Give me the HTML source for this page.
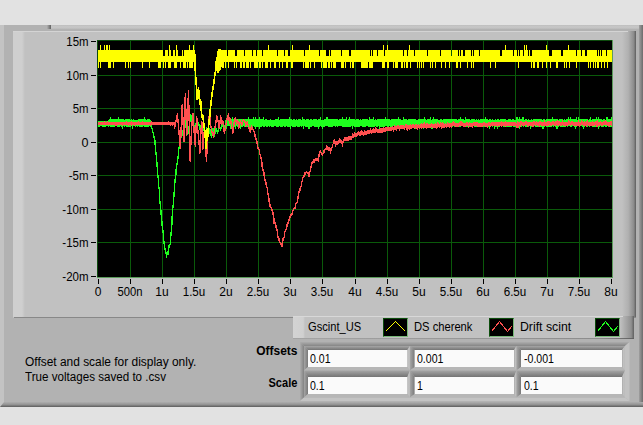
<!DOCTYPE html>
<html><head><meta charset="utf-8"><title>Waveform</title>
<style>
html,body{margin:0;padding:0}
body{width:643px;height:425px;background:#e2e2e2;overflow:hidden;position:relative;font-family:"Liberation Sans",sans-serif;color:#000}
div{position:absolute;box-sizing:border-box}
.frame{left:0;top:25px;width:643px;height:382px;background:#b2b2b2}
.fl{left:0;top:25px;width:4px;height:382px;background:#c3c3c3}
.fr{left:639px;top:25px;width:4px;height:382px;background:linear-gradient(90deg,#a0a0a0,#6c6c6c)}
.fb{left:0;top:402px;width:643px;height:5px;background:linear-gradient(180deg,#aeaeae,#949494 50%,#5c5c5c);clip-path:polygon(4px 0,100% 0,100% 100%,0 100%)}
.ft{left:51px;top:25px;width:592px;height:4px;background:linear-gradient(180deg,#bebebe,#c8c8c8 50%,#bababa)}
.fn{left:47px;top:25px;width:4px;height:4px;background:linear-gradient(90deg,#b0b0b0,#606060)}
.panel{left:13px;top:31px;width:623px;height:287px;background:#c1c1c1}
.pl{left:13px;top:31px;width:12px;height:286px;background:linear-gradient(90deg,#cfcfcf,#cfcfcf 75%,#c1c1c1)}
.pr{left:622px;top:31px;width:14px;height:286px;background:linear-gradient(90deg,#c1c1c1,#b0b0b0 45%,#8a8a8a 85%,#5c5c5c)}
.pt{left:13px;top:31px;width:615px;height:1px;background:#d4d4d4}
.pb{left:14px;top:317px;width:622px;height:1px;background:#888}
.plot{position:absolute;left:0;top:0}
.legend{left:293px;top:316px;width:341px;height:23px;background:#c1c1c1}
.lgl{left:293px;top:316px;width:12px;height:22px;background:linear-gradient(90deg,#d3d3d3,#d0d0d0 85%,#c1c1c1)}
.lgr{left:620px;top:316px;width:14px;height:23px;background:linear-gradient(90deg,#c1c1c1,#909090 80%,#606060)}
.lgt{left:293px;top:316px;width:330px;height:1px;background:#d8d8d8}
.lgb{left:293px;top:338px;width:341px;height:1px;background:linear-gradient(90deg,#a4a4a4,#8c8c8c 90%,#606060)}
.t{white-space:nowrap;transform-origin:0 0}
.lt{font-size:13px;line-height:16px;top:319px}
.ic{width:25px;height:19px;top:318px;background:#000;border:1px solid;border-color:#0c4c0c #78b878 #78b878 #0c4c0c}
.ic svg{position:absolute;left:-1px;top:-1px}
.note{left:24.6px;font-size:12px;line-height:15px}
.lab{font-weight:bold;font-size:12px;line-height:14px;transform-origin:100% 0;right:345.5px}
.cv{font-size:12px;line-height:15px;transform:scaleX(.88)}
</style></head><body>
<div class="frame"></div><div class="fl"></div><div class="ft"></div><div class="fn"></div><div class="fr"></div><div class="fb"></div>
<div class="panel"></div><div class="pl"></div><div class="pr"></div><div class="pt"></div><div class="pb"></div>
<svg class="plot" width="643" height="425" viewBox="0 0 643 425">
<g shape-rendering="crispEdges">
<rect x="97" y="40" width="516" height="238" fill="#000"/>
<g fill="#0a5a0a"><rect x="130" y="41" width="1" height="236"/><rect x="162" y="41" width="1" height="236"/><rect x="194" y="41" width="1" height="236"/><rect x="226" y="41" width="1" height="236"/><rect x="258" y="41" width="1" height="236"/><rect x="290" y="41" width="1" height="236"/><rect x="322" y="41" width="1" height="236"/><rect x="355" y="41" width="1" height="236"/><rect x="387" y="41" width="1" height="236"/><rect x="419" y="41" width="1" height="236"/><rect x="451" y="41" width="1" height="236"/><rect x="483" y="41" width="1" height="236"/><rect x="515" y="41" width="1" height="236"/><rect x="547" y="41" width="1" height="236"/><rect x="579" y="41" width="1" height="236"/><rect x="98" y="75" width="514" height="1"/><rect x="98" y="108" width="514" height="1"/><rect x="98" y="142" width="514" height="1"/><rect x="98" y="175" width="514" height="1"/><rect x="98" y="209" width="514" height="1"/><rect x="98" y="242" width="514" height="1"/></g>
<g fill="#0c4a0c"><rect x="97" y="40" width="516" height="1"/><rect x="97" y="40" width="1" height="238"/></g>
<g fill="#5c9c5c"><rect x="97" y="277" width="516" height="1"/><rect x="612" y="40" width="1" height="238"/></g>
<g fill="#000"><rect x="98" y="279" width="1" height="5"/><rect x="130" y="279" width="1" height="5"/><rect x="162" y="279" width="1" height="5"/><rect x="194" y="279" width="1" height="5"/><rect x="226" y="279" width="1" height="5"/><rect x="258" y="279" width="1" height="5"/><rect x="290" y="279" width="1" height="5"/><rect x="322" y="279" width="1" height="5"/><rect x="355" y="279" width="1" height="5"/><rect x="387" y="279" width="1" height="5"/><rect x="419" y="279" width="1" height="5"/><rect x="451" y="279" width="1" height="5"/><rect x="483" y="279" width="1" height="5"/><rect x="515" y="279" width="1" height="5"/><rect x="547" y="279" width="1" height="5"/><rect x="579" y="279" width="1" height="5"/><rect x="611" y="279" width="1" height="5"/><rect x="91" y="41" width="5" height="1"/><rect x="91" y="75" width="5" height="1"/><rect x="91" y="108" width="5" height="1"/><rect x="91" y="142" width="5" height="1"/><rect x="91" y="175" width="5" height="1"/><rect x="91" y="209" width="5" height="1"/><rect x="91" y="242" width="5" height="1"/><rect x="91" y="276" width="5" height="1"/></g>
</g>
<g fill="none" stroke-linejoin="round">
<path stroke="#1eff1e" stroke-width="1" shape-rendering="crispEdges" d="M98.5 121V127M99.5 121V127M100.5 121V126M101.5 121V126M102.5 121V127M103.5 121V127M104.5 121V127M105.5 121V127M106.5 121V126M107.5 121V126M108.5 120V127M109.5 119V126M110.5 117V127M111.5 119V127M112.5 119V127M113.5 119V127M114.5 119V127M115.5 119V126M116.5 119V126M117.5 119V127M118.5 117V127M119.5 119V127M120.5 119V126M121.5 119V127M122.5 119V129M123.5 119V126M124.5 120V127M125.5 119V126M126.5 119V127M127.5 119V127M128.5 119V127M129.5 119V127M130.5 120V127M131.5 119V126M132.5 120V129M133.5 119V126M134.5 120V126M135.5 120V127M136.5 120V126M137.5 120V127M138.5 119V126M139.5 119V127M140.5 119V127M141.5 119V127M142.5 119V127M143.5 119V126M144.5 117V127M145.5 119V127M146.5 120V127M147.5 119V127M148.5 119V127M149.5 119V126M150.5 120V127M225.5 120V127M226.5 119V129M227.5 119V126M228.5 119V126M229.5 119V126M230.5 119V129M231.5 119V129M232.5 117V127M233.5 119V127M234.5 119V127M235.5 119V129M236.5 119V126M237.5 119V127M238.5 119V126M239.5 119V127M240.5 119V129M241.5 119V127M242.5 119V127M243.5 120V126M244.5 119V127M245.5 119V127M246.5 119V127M247.5 119V127M248.5 117V127M249.5 119V127M250.5 119V127M251.5 119V129M252.5 119V127M253.5 117V126M254.5 119V127M255.5 117V129M256.5 119V127M257.5 119V127M258.5 119V127M259.5 117V129M260.5 119V127M261.5 119V127M262.5 119V126M263.5 117V127M264.5 120V127M265.5 119V126M266.5 119V127M267.5 120V127M268.5 120V126M269.5 120V127M270.5 119V126M271.5 120V127M272.5 120V127M273.5 120V127M274.5 120V126M275.5 119V126M276.5 119V127M277.5 119V127M278.5 117V127M279.5 120V126M280.5 119V127M281.5 119V127M282.5 119V127M283.5 119V126M284.5 119V127M285.5 119V127M286.5 119V126M287.5 119V127M288.5 119V127M289.5 117V127M290.5 119V129M291.5 119V126M292.5 120V127M293.5 119V127M294.5 119V127M295.5 120V127M296.5 119V126M297.5 120V127M298.5 119V127M299.5 119V127M300.5 119V126M301.5 120V127M302.5 117V126M303.5 119V129M304.5 119V126M305.5 120V127M306.5 119V127M307.5 119V127M308.5 119V129M309.5 120V129M310.5 119V127M311.5 119V127M312.5 120V126M313.5 119V126M314.5 119V127M315.5 119V127M316.5 119V127M317.5 120V127M318.5 119V129M319.5 119V127M320.5 117V126M321.5 120V127M322.5 120V129M323.5 120V127M324.5 119V127M325.5 119V126M326.5 117V126M327.5 117V126M328.5 119V127M329.5 119V127M330.5 119V127M331.5 119V127M332.5 119V127M333.5 119V126M334.5 119V126M335.5 119V127M336.5 119V126M337.5 119V127M338.5 120V126M339.5 119V126M340.5 119V126M341.5 119V126M342.5 117V127M343.5 119V127M344.5 119V127M345.5 119V127M346.5 117V127M347.5 120V127M348.5 119V127M349.5 117V127M350.5 119V127M351.5 119V126M352.5 119V129M353.5 119V126M354.5 119V127M355.5 120V127M356.5 119V127M357.5 119V127M358.5 119V127M359.5 120V127M360.5 119V126M361.5 120V126M362.5 119V127M363.5 119V127M364.5 119V127M365.5 119V127M366.5 119V126M367.5 119V126M368.5 120V127M369.5 117V127M370.5 119V127M371.5 119V127M372.5 119V127M373.5 117V127M374.5 120V127M375.5 119V126M376.5 120V127M377.5 119V127M378.5 119V126M379.5 119V129M380.5 119V127M381.5 119V127M382.5 119V127M383.5 119V127M384.5 119V127M385.5 117V126M386.5 119V126M387.5 119V127M388.5 119V127M389.5 119V126M390.5 120V127M391.5 119V127M392.5 119V127M393.5 119V126M394.5 119V127M395.5 119V127M396.5 119V126M397.5 119V127M398.5 117V127M399.5 119V127M400.5 119V126M401.5 120V127M402.5 120V126M403.5 117V129M404.5 119V127M405.5 119V127M406.5 119V127M407.5 120V127M408.5 119V126M409.5 119V127M410.5 119V127M411.5 119V127M412.5 119V126M413.5 119V127M414.5 119V126M415.5 119V129M416.5 120V127M417.5 120V127M418.5 119V126M419.5 119V127M420.5 119V127M421.5 119V126M422.5 119V127M423.5 119V129M424.5 117V126M425.5 119V127M426.5 120V127M427.5 119V127M428.5 119V127M429.5 119V127M430.5 117V127M431.5 120V129M432.5 119V129M433.5 117V127M434.5 119V126M435.5 119V127M436.5 119V127M437.5 119V127M438.5 120V126M439.5 120V127M440.5 119V127M441.5 119V127M442.5 120V127M443.5 119V127M444.5 119V127M445.5 119V126M446.5 119V127M447.5 119V127M448.5 119V127M449.5 119V127M450.5 119V127M451.5 119V127M452.5 119V127M453.5 119V126M454.5 119V127M455.5 119V127M456.5 119V127M457.5 120V127M458.5 119V127M459.5 119V127M460.5 117V127M461.5 119V126M462.5 119V126M463.5 119V127M464.5 120V127M465.5 117V127M466.5 119V127M467.5 119V127M468.5 119V127M469.5 119V127M470.5 120V127M471.5 119V127M472.5 119V126M473.5 119V126M474.5 119V127M475.5 120V127M476.5 119V127M477.5 120V127M478.5 119V127M479.5 120V127M480.5 119V126M481.5 119V127M482.5 119V127M483.5 119V127M484.5 119V127M485.5 117V126M486.5 119V127M487.5 119V127M488.5 120V127M489.5 119V129M490.5 119V127M491.5 120V126M492.5 119V127M493.5 120V126M494.5 120V129M495.5 119V127M496.5 120V127M497.5 119V129M498.5 119V127M499.5 120V127M500.5 119V126M501.5 119V126M502.5 119V126M503.5 119V127M504.5 119V127M505.5 119V126M506.5 120V127M507.5 120V127M508.5 119V127M509.5 119V127M510.5 119V127M511.5 120V127M512.5 119V126M513.5 119V127M514.5 120V127M515.5 120V127M516.5 117V127M517.5 117V127M518.5 119V127M519.5 117V129M520.5 119V127M521.5 119V127M522.5 117V126M523.5 117V127M524.5 120V126M525.5 119V127M526.5 119V127M527.5 120V127M528.5 119V127M529.5 120V126M530.5 120V129M531.5 119V127M532.5 120V126M533.5 119V127M534.5 119V126M535.5 119V127M536.5 119V127M537.5 119V127M538.5 119V127M539.5 119V127M540.5 119V127M541.5 119V127M542.5 120V129M543.5 119V129M544.5 119V127M545.5 120V126M546.5 119V127M547.5 119V127M548.5 119V127M549.5 119V127M550.5 119V127M551.5 119V127M552.5 117V126M553.5 119V127M554.5 119V126M555.5 119V127M556.5 119V129M557.5 119V129M558.5 120V127M559.5 119V126M560.5 119V127M561.5 119V127M562.5 119V127M563.5 120V127M564.5 119V127M565.5 120V127M566.5 119V126M567.5 119V127M568.5 117V126M569.5 119V126M570.5 117V127M571.5 119V127M572.5 119V126M573.5 119V126M574.5 119V127M575.5 119V129M576.5 117V127M577.5 120V126M578.5 117V126M579.5 119V127M580.5 119V126M581.5 119V126M582.5 119V127M583.5 119V129M584.5 119V127M585.5 119V126M586.5 119V126M587.5 119V127M588.5 120V126M589.5 119V127M590.5 117V126M591.5 120V126M592.5 119V127M593.5 119V127M594.5 119V127M595.5 119V127M596.5 117V127M597.5 119V127M598.5 117V129M599.5 119V127M600.5 119V126M601.5 119V127M602.5 120V127M603.5 119V127M604.5 119V126M605.5 120V127M606.5 117V127M607.5 117V126M608.5 119V127M609.5 119V127M610.5 119V127M611.5 117V127"/>
<path stroke="#1eff1e" stroke-width="1.4" shape-rendering="crispEdges" d="M149.8 121.2L150.3 122.9L151.2 125.7L151.3 126.2L152.2 128.9L152.7 128.9L152.8 131.7L153.3 133.5L153.9 136.9L154.3 138.0L155.0 140.7L155.3 147.3L156.0 153.1L156.5 158.4L157.1 164.9L157.4 170.7L158.2 178.2L158.4 184.1L159.2 189.0L159.4 196.4L159.9 202.3L160.7 206.7L160.9 212.4L161.6 218.4L162.1 223.6L162.3 227.2L163.2 232.9L163.3 238.3L164.1 242.9L164.4 245.6L165.2 249.6L165.5 253.3L166.2 252.6L166.6 257.3L166.8 254.5L167.5 251.8L168.1 254.9L168.6 250.5L168.9 247.4L169.3 244.8L170.2 243.9L170.4 239.4L171.1 232.9L171.7 226.7L172.0 220.9L172.3 214.0L172.8 208.6L173.4 202.9L174.1 193.5L174.6 186.6L175.0 180.5L175.7 177.0L176.0 171.5L176.4 167.4L177.1 163.8L177.6 159.0L178.1 157.6L178.4 153.6L178.8 149.1L179.5 146.3L180.1 144.1L180.6 142.3L180.8 138.2L181.3 137.0L182.2 135.5L182.5 133.9L182.9 130.6L183.6 128.9L183.9 127.4L184.0 128.0L185.0 119.5L186.0 127.0L187.0 124.0L188.0 134.0L189.5 124.0L190.8 115.0L192.0 122.0L193.0 114.7L194.0 128.0L195.5 124.0L197.0 130.0L198.5 123.0L200.0 129.0L201.5 124.0L203.0 131.0L204.5 126.0L206.0 147.0L207.0 128.0L208.5 135.0L210.0 129.0L211.5 137.0L213.0 129.0L214.5 136.0L216.0 128.0L217.5 133.0L219.0 126.0L220.5 130.0L222.0 124.0L224.0 128.0L226.0 123.0"/>
<path stroke="#ff5050" stroke-width="1" shape-rendering="crispEdges" d="M98.5 122V125M99.5 122V125M100.5 122V125M101.5 122V125M102.5 122V125M103.5 122V125M104.5 121V125M105.5 122V125M106.5 122V125M107.5 121V125M108.5 122V125M109.5 122V125M110.5 122V125M111.5 122V125M112.5 122V125M113.5 122V125M114.5 122V125M115.5 122V126M116.5 122V126M117.5 122V125M118.5 122V125M119.5 122V125M120.5 122V125M121.5 122V125M122.5 122V126M123.5 122V125M124.5 122V125M125.5 122V125M126.5 121V125M127.5 122V125M128.5 122V126M129.5 122V125M130.5 122V125M131.5 121V126M132.5 122V125M133.5 122V125M134.5 122V126M135.5 122V125M136.5 122V125M137.5 122V125M138.5 121V125M139.5 122V125M140.5 122V125M141.5 122V125M142.5 121V125M143.5 122V125M144.5 122V125M145.5 122V125M146.5 122V125M147.5 122V125M148.5 122V125M149.5 122V125M150.5 122V126M151.5 121V125M152.5 122V125M153.5 122V125M154.5 122V125M155.5 122V125M156.5 122V125M157.5 122V125M158.5 122V125M159.5 122V125M160.5 122V125M161.5 122V125M162.5 122V125M163.5 122V125M164.5 122V125M165.5 122V125M166.5 122V125M167.5 122V125M168.5 121V125M169.5 122V125M170.5 122V126M171.5 122V125M172.5 122V126M173.5 122V125M174.5 122V125M326.5 145V150M327.5 146V150M328.5 147V151M329.5 147V151M330.5 148V154M331.5 147V151M332.5 144V148M333.5 140V144M334.5 139V144M335.5 141V147M336.5 141V145M337.5 141V145M338.5 140V144M339.5 138V143M340.5 139V143M341.5 140V144M342.5 141V147M343.5 139V143M344.5 137V141M345.5 137V141M346.5 137V141M347.5 137V141M348.5 136V141M349.5 136V140M350.5 136V140M351.5 136V140M352.5 133V138M353.5 134V138M354.5 132V137M355.5 133V137M356.5 133V137M357.5 132V136M358.5 131V135M359.5 132V136M360.5 131V136M361.5 130V135M362.5 131V135M363.5 132V136M364.5 130V135M365.5 131V135M366.5 131V135M367.5 130V134M368.5 130V134M369.5 130V134M370.5 128V133M371.5 130V134M372.5 129V133M373.5 128V133M374.5 129V133M375.5 127V133M376.5 128V132M377.5 129V133M378.5 129V133M379.5 129V133M380.5 128V133M381.5 128V133M382.5 128V133M383.5 127V132M384.5 128V132M385.5 127V132M386.5 127V131M387.5 127V131M388.5 127V131M389.5 127V131M390.5 127V131M391.5 127V131M392.5 126V130M393.5 127V132M394.5 125V130M395.5 126V130M396.5 126V131M397.5 125V129M398.5 125V129M399.5 126V131M400.5 125V129M401.5 125V129M402.5 125V129M403.5 125V129M404.5 126V130M405.5 124V128M406.5 124V130M407.5 125V131M408.5 125V129M409.5 125V130M410.5 124V129M411.5 125V129M412.5 124V128M413.5 124V128M414.5 125V129M415.5 124V128M416.5 124V129M417.5 125V130M418.5 124V128M419.5 125V129M420.5 124V128M421.5 123V129M422.5 124V128M423.5 123V128M424.5 122V128M425.5 124V128M426.5 123V129M427.5 123V128M428.5 124V128M429.5 124V128M430.5 124V128M431.5 123V127M432.5 124V128M433.5 124V128M434.5 124V128M435.5 123V128M436.5 124V129M437.5 122V128M438.5 123V127M439.5 124V128M440.5 122V127M441.5 123V129M442.5 122V128M443.5 123V128M444.5 124V128M445.5 123V127M446.5 124V128M447.5 122V127M448.5 123V127M449.5 123V128M450.5 123V127M451.5 123V128M452.5 122V126M453.5 121V126M454.5 122V126M455.5 123V127M456.5 123V127M457.5 123V127M458.5 123V127M459.5 122V126M460.5 121V126M461.5 121V126M462.5 122V126M463.5 123V127M464.5 123V127M465.5 123V127M466.5 122V126M467.5 122V126M468.5 123V128M469.5 122V126M470.5 123V127M471.5 123V127M472.5 123V128M473.5 122V126M474.5 122V126M475.5 122V126M476.5 122V126M477.5 122V127M478.5 123V127M479.5 123V127M480.5 123V127M481.5 123V127M482.5 123V127M483.5 122V126M484.5 122V126M485.5 123V127M486.5 123V127M487.5 123V128M488.5 122V126M489.5 122V126M490.5 123V127M491.5 122V126M492.5 122V126M493.5 122V126M494.5 122V126M495.5 122V126M496.5 122V126M497.5 122V127M498.5 122V126M499.5 122V126M500.5 122V126M501.5 121V127M502.5 122V126M503.5 122V126M504.5 122V126M505.5 121V127M506.5 122V126M507.5 122V126M508.5 122V126M509.5 122V126M510.5 122V126M511.5 122V126M512.5 122V126M513.5 122V126M514.5 122V126M515.5 122V126M516.5 123V128M517.5 121V128M518.5 122V128M519.5 122V126M520.5 121V127M521.5 121V125M522.5 122V126M523.5 122V126M524.5 122V126M525.5 121V125M526.5 121V125M527.5 122V127M528.5 122V126M529.5 122V126M530.5 122V126M531.5 122V126M532.5 122V127M533.5 121V127M534.5 121V125M535.5 122V126M536.5 121V125M537.5 122V126M538.5 122V126M539.5 121V127M540.5 121V125M541.5 122V126M542.5 122V126M543.5 122V126M544.5 120V126M545.5 122V126M546.5 122V126M547.5 121V126M548.5 121V126M549.5 121V125M550.5 122V126M551.5 122V126M552.5 121V125M553.5 121V125M554.5 122V126M555.5 121V126M556.5 121V125M557.5 120V126M558.5 121V126M559.5 121V125M560.5 122V126M561.5 122V126M562.5 120V125M563.5 122V126M564.5 122V126M565.5 122V126M566.5 122V126M567.5 122V126M568.5 120V125M569.5 121V125M570.5 122V126M571.5 121V125M572.5 121V125M573.5 122V126M574.5 122V126M575.5 122V126M576.5 122V126M577.5 122V126M578.5 120V126M579.5 122V127M580.5 122V126M581.5 120V125M582.5 121V125M583.5 122V126M584.5 121V126M585.5 122V126M586.5 121V127M587.5 120V125M588.5 122V126M589.5 122V126M590.5 122V126M591.5 122V126M592.5 121V126M593.5 122V126M594.5 122V126M595.5 121V125M596.5 121V127M597.5 120V127M598.5 122V126M599.5 122V126M600.5 121V125M601.5 122V126M602.5 122V126M603.5 121V125M604.5 121V125M605.5 120V125M606.5 121V125M607.5 122V126M608.5 122V126M609.5 122V127M610.5 121V125M611.5 121V126"/>
<path stroke="#ff5050" stroke-width="1.4" shape-rendering="crispEdges" d="M174.0 123.0L174.6 128.3L176.0 121.0L177.4 113.8L178.8 130.0L180.4 148.0L181.3 125.0L182.2 105.0L183.2 125.0L184.0 141.5L184.7 115.0L185.3 94.0L186.0 115.0L186.8 135.0L187.6 112.0L188.5 91.0L189.3 125.0L190.1 161.0L191.5 130.0L192.9 113.3L194.0 130.0L195.3 146.2L196.0 128.0L196.7 117.0L198.3 135.0L200.0 153.0L201.0 130.0L201.8 122.0L202.8 149.0L204.5 128.0L205.3 136.0L206.4 161.7L207.6 140.0L208.5 125.0L209.4 113.3L210.8 126.0L212.5 134.0L213.5 136.8L215.2 126.0L217.0 116.0L218.2 122.0L219.3 128.8L220.7 116.0L221.8 124.0L223.0 121.0L224.4 133.5L226.5 121.0L228.4 114.0L229.5 123.0L230.5 119.0L231.6 126.0L233.0 133.0L234.2 122.0L235.4 117.5L236.6 124.0L237.6 120.0L239.0 128.0L240.4 121.0L241.8 125.0L243.2 120.0L244.8 121.0L246.0 126.0L247.4 122.0L248.6 127.0L250.4 132.0L251.5 126.0L252.5 129.0L252.8 129.6L253.5 130.8L254.1 131.1L254.6 136.0L254.9 134.6L255.3 135.6L256.2 139.7L256.2 140.6L257.1 141.5L257.2 143.6L257.9 148.0L258.4 149.5L259.2 149.9L259.3 153.9L259.8 154.7L260.3 154.2L260.9 157.1L261.8 162.2L262.2 167.1L262.7 167.6L263.0 170.9L263.6 169.3L264.0 173.5L264.5 178.1L265.1 179.8L265.7 184.1L265.8 182.4L266.2 185.1L267.3 188.7L267.5 192.4L268.0 193.8L268.7 196.8L269.2 202.2L269.2 202.5L269.8 206.2L270.2 204.7L271.2 208.3L271.6 209.2L272.0 210.0L272.5 212.1L273.1 213.2L273.3 215.5L274.0 219.4L274.2 223.7L275.2 222.3L275.3 226.9L276.3 225.2L276.7 230.8L277.3 229.4L277.3 231.2L277.8 237.3L278.7 236.9L278.8 238.4L279.3 241.1L280.1 242.8L280.5 242.7L281.0 243.5L281.5 245.8L282.1 246.0L282.5 242.8L282.7 241.6L283.4 237.4L283.7 237.6L284.8 237.8L284.7 232.7L285.4 230.6L285.8 230.0L286.7 227.4L286.8 224.6L287.2 226.2L287.8 224.4L288.7 219.8L288.8 219.4L289.7 219.9L289.9 217.0L290.4 215.7L291.2 213.9L291.7 215.4L292.1 214.6L292.8 210.6L293.3 209.8L293.7 208.5L293.9 208.7L294.7 208.6L294.8 208.5L295.7 206.0L295.7 204.0L296.4 202.8L297.3 201.9L297.7 197.4L297.8 199.0L298.4 194.6L298.7 191.8L299.4 192.6L299.9 190.9L300.4 186.3L301.1 186.2L301.5 184.7L301.9 181.3L302.4 180.8L302.8 177.8L303.5 176.1L304.2 176.1L304.5 175.7L304.7 173.1L305.7 173.9L306.0 172.2L306.7 171.8L307.2 172.3L307.7 172.9L308.1 173.0L308.5 174.3L309.0 176.1L309.7 171.2L310.2 171.8L310.6 171.4L310.7 167.1L311.4 167.7L311.8 163.6L312.3 162.4L313.0 161.7L313.4 162.1L313.7 159.7L314.6 161.8L315.2 159.6L315.2 160.9L316.1 158.6L316.8 160.0L316.7 159.8L317.4 158.3L318.2 161.2L318.3 157.9L318.9 156.9L319.3 152.7L319.9 151.3L320.5 150.8L321.3 153.1L321.7 154.2L321.8 153.2L322.5 155.3L323.1 153.4L323.8 152.4L323.7 150.7L324.3 152.2L325.2 148.8L325.3 148.7L326.2 150.1"/>
<path stroke="#ffff00" stroke-width="1" shape-rendering="crispEdges" d="M98.5 50V68M99.5 50V62M100.5 45V68M101.5 50V62M102.5 50V62M103.5 50V62M104.5 45V62M105.5 50V62M106.5 45V62M107.5 45V62M108.5 50V68M109.5 45V68M110.5 50V68M111.5 50V62M112.5 50V62M113.5 50V68M114.5 50V62M115.5 50V62M116.5 50V62M117.5 50V62M118.5 50V62M119.5 50V62M120.5 50V62M121.5 50V62M122.5 50V62M123.5 50V62M124.5 50V62M125.5 50V68M126.5 50V62M127.5 50V62M128.5 50V68M129.5 50V62M130.5 50V68M131.5 50V62M132.5 50V62M133.5 50V62M134.5 50V62M135.5 50V62M136.5 50V62M137.5 50V62M138.5 50V62M139.5 50V62M140.5 50V62M141.5 50V62M142.5 50V68M143.5 50V62M144.5 50V62M145.5 50V62M146.5 50V62M147.5 50V62M148.5 50V62M149.5 50V68M150.5 50V62M151.5 50V62M152.5 50V62M153.5 50V62M154.5 50V62M155.5 50V62M156.5 50V62M157.5 50V62M158.5 50V68M159.5 50V68M160.5 50V68M161.5 50V62M162.5 50V62M163.5 56V68M164.5 56V62M165.5 50V68M166.5 50V62M167.5 50V62M168.5 56V68M169.5 45V68M170.5 50V68M171.5 56V62M172.5 56V62M173.5 50V62M174.5 50V68M175.5 56V68M176.5 45V68M177.5 50V62M178.5 56V62M179.5 56V62M180.5 56V68M181.5 56V62M182.5 50V62M183.5 56V68M184.5 50V68M185.5 50V68M186.5 50V62M187.5 50V68M188.5 50V62M189.5 45V68M190.5 50V68M191.5 50V68M192.5 50V68M193.5 45V62M194.5 50V62M222.5 50V68M223.5 50V68M224.5 50V62M225.5 50V68M226.5 50V62M227.5 56V62M228.5 50V68M229.5 50V62M230.5 50V62M231.5 50V62M232.5 50V62M233.5 50V62M234.5 50V68M235.5 56V62M236.5 56V68M237.5 50V62M238.5 50V62M239.5 50V62M240.5 50V68M241.5 50V68M242.5 50V62M243.5 50V68M244.5 56V68M245.5 50V62M246.5 50V68M247.5 50V68M248.5 50V68M249.5 50V62M250.5 50V68M251.5 50V62M252.5 56V62M253.5 50V62M254.5 50V68M255.5 50V68M256.5 56V68M257.5 50V68M258.5 50V62M259.5 50V68M260.5 50V68M261.5 50V62M262.5 56V68M263.5 50V62M264.5 50V62M265.5 50V68M266.5 50V68M267.5 50V68M268.5 45V62M269.5 50V62M270.5 50V68M271.5 50V62M272.5 50V62M273.5 50V62M274.5 50V68M275.5 50V68M276.5 50V62M277.5 56V62M278.5 50V62M279.5 50V68M280.5 50V62M281.5 50V62M282.5 50V68M283.5 50V62M284.5 56V62M285.5 50V62M286.5 50V68M287.5 50V68M288.5 56V62M289.5 56V62M290.5 50V62M291.5 50V68M292.5 45V68M293.5 50V62M294.5 50V62M295.5 50V62M296.5 50V62M297.5 50V62M298.5 50V62M299.5 50V62M300.5 50V62M301.5 50V62M302.5 50V62M303.5 50V68M304.5 56V62M305.5 50V68M306.5 50V68M307.5 50V68M308.5 50V68M309.5 45V62M310.5 50V68M311.5 50V62M312.5 50V62M313.5 50V62M314.5 50V68M315.5 50V62M316.5 50V62M317.5 50V62M318.5 50V62M319.5 56V62M320.5 50V62M321.5 50V68M322.5 50V62M323.5 50V68M324.5 50V68M325.5 50V68M326.5 56V68M327.5 56V62M328.5 56V68M329.5 50V68M330.5 56V62M331.5 50V68M332.5 50V62M333.5 50V68M334.5 50V68M335.5 50V68M336.5 50V62M337.5 50V62M338.5 50V62M339.5 50V62M340.5 50V62M341.5 56V68M342.5 50V68M343.5 50V68M344.5 50V62M345.5 50V68M346.5 50V62M347.5 50V62M348.5 50V62M349.5 56V62M350.5 56V68M351.5 50V62M352.5 50V68M353.5 50V68M354.5 50V62M355.5 50V62M356.5 50V62M357.5 50V62M358.5 50V62M359.5 50V62M360.5 50V62M361.5 50V68M362.5 50V68M363.5 50V68M364.5 50V68M365.5 50V68M366.5 50V68M367.5 50V68M368.5 50V62M369.5 50V68M370.5 56V68M371.5 50V68M372.5 56V68M373.5 50V62M374.5 50V62M375.5 50V62M376.5 50V62M377.5 56V62M378.5 50V62M379.5 50V62M380.5 50V62M381.5 50V62M382.5 50V68M383.5 45V68M384.5 56V68M385.5 50V62M386.5 50V62M387.5 45V68M388.5 50V68M389.5 50V62M390.5 50V62M391.5 50V62M392.5 50V62M393.5 50V68M394.5 50V62M395.5 50V68M396.5 50V68M397.5 50V68M398.5 50V62M399.5 50V62M400.5 50V62M401.5 50V68M402.5 50V68M403.5 56V62M404.5 50V68M405.5 50V62M406.5 50V68M407.5 56V68M408.5 50V62M409.5 45V62M410.5 50V68M411.5 50V62M412.5 50V62M413.5 50V62M414.5 56V62M415.5 50V62M416.5 50V62M417.5 50V68M418.5 50V62M419.5 50V68M420.5 50V62M421.5 50V68M422.5 50V62M423.5 50V68M424.5 50V62M425.5 50V62M426.5 50V62M427.5 56V62M428.5 50V62M429.5 50V62M430.5 50V68M431.5 50V62M432.5 50V68M433.5 50V62M434.5 50V62M435.5 50V68M436.5 50V62M437.5 50V62M438.5 50V62M439.5 50V62M440.5 56V62M441.5 50V68M442.5 50V62M443.5 50V62M444.5 50V62M445.5 50V68M446.5 50V62M447.5 50V62M448.5 50V62M449.5 50V68M450.5 50V62M451.5 56V62M452.5 50V62M453.5 50V62M454.5 50V62M455.5 50V62M456.5 50V68M457.5 50V68M458.5 56V62M459.5 50V62M460.5 56V68M461.5 50V62M462.5 50V62M463.5 56V62M464.5 56V62M465.5 50V62M466.5 50V62M467.5 50V68M468.5 50V62M469.5 50V62M470.5 50V62M471.5 56V68M472.5 50V62M473.5 56V68M474.5 50V62M475.5 50V62M476.5 50V62M477.5 50V62M478.5 50V62M479.5 56V62M480.5 50V62M481.5 50V62M482.5 50V62M483.5 50V62M484.5 50V62M485.5 50V62M486.5 50V62M487.5 50V62M488.5 50V62M489.5 50V62M490.5 50V68M491.5 50V62M492.5 50V62M493.5 50V62M494.5 50V62M495.5 50V68M496.5 50V62M497.5 50V62M498.5 50V62M499.5 50V62M500.5 56V62M501.5 56V62M502.5 50V62M503.5 50V62M504.5 50V62M505.5 45V62M506.5 50V62M507.5 50V62M508.5 50V62M509.5 50V62M510.5 50V62M511.5 50V62M512.5 50V62M513.5 56V62M514.5 50V62M515.5 50V62M516.5 50V62M517.5 56V62M518.5 50V68M519.5 56V62M520.5 50V62M521.5 50V62M522.5 50V62M523.5 56V62M524.5 45V62M525.5 50V62M526.5 45V62M527.5 50V62M528.5 56V62M529.5 50V62M530.5 56V62M531.5 56V68M532.5 50V62M533.5 50V68M534.5 50V68M535.5 50V62M536.5 50V62M537.5 50V68M538.5 50V68M539.5 50V62M540.5 50V62M541.5 50V62M542.5 50V68M543.5 50V62M544.5 50V62M545.5 50V62M546.5 45V68M547.5 50V62M548.5 50V62M549.5 56V62M550.5 56V68M551.5 56V62M552.5 50V62M553.5 50V62M554.5 50V62M555.5 50V62M556.5 50V68M557.5 50V68M558.5 50V62M559.5 50V62M560.5 50V62M561.5 56V62M562.5 56V62M563.5 50V62M564.5 50V68M565.5 50V62M566.5 50V68M567.5 50V62M568.5 45V62M569.5 50V68M570.5 50V62M571.5 50V62M572.5 50V62M573.5 50V62M574.5 50V62M575.5 50V62M576.5 56V68M577.5 50V62M578.5 50V62M579.5 50V62M580.5 50V62M581.5 56V62M582.5 50V62M583.5 50V62M584.5 50V62M585.5 56V62M586.5 56V62M587.5 50V62M588.5 50V68M589.5 50V62M590.5 50V68M591.5 50V62M592.5 50V62M593.5 50V68M594.5 50V62M595.5 50V68M596.5 50V62M597.5 56V68M598.5 50V68M599.5 56V62M600.5 50V62M601.5 56V68M602.5 50V62M603.5 50V62M604.5 50V68M605.5 50V62M606.5 56V62M607.5 50V68M608.5 50V62M609.5 50V62M610.5 50V62M611.5 50V62"/>
<path stroke="#ffff00" stroke-width="1.7" shape-rendering="crispEdges" d="M194.5 50.0L195.0 62.0L195.5 75.0L196.3 84.0L197.0 99.0L198.0 92.0L198.5 88.0L199.2 97.0L200.0 104.0L200.6 100.0L201.5 113.0L202.5 119.0L203.0 116.0L204.0 126.0L205.0 132.0L205.5 140.0L206.0 148.0L206.5 138.0L206.8 130.0L207.5 140.0L208.0 131.0L209.0 122.0L209.8 116.0L210.5 108.0L211.3 100.0L212.3 92.0L213.5 85.0L214.3 79.0L215.0 74.0L216.0 68.0L216.5 58.0L217.0 70.0L217.5 52.0L218.0 72.0L218.6 50.0L219.2 70.0L220.0 50.0L220.6 69.0L221.3 50.0"/>
</g>
<g font-family="'Liberation Sans',sans-serif" font-size="12px" fill="#000"><text x="98" y="295.5" text-anchor="middle">0</text><text x="130" y="295.5" text-anchor="middle" textLength="25" lengthAdjust="spacingAndGlyphs">500n</text><text x="162" y="295.5" text-anchor="middle">1u</text><text x="194" y="295.5" text-anchor="middle" textLength="22.6" lengthAdjust="spacingAndGlyphs">1.5u</text><text x="226" y="295.5" text-anchor="middle">2u</text><text x="258" y="295.5" text-anchor="middle" textLength="22.6" lengthAdjust="spacingAndGlyphs">2.5u</text><text x="290" y="295.5" text-anchor="middle">3u</text><text x="322" y="295.5" text-anchor="middle" textLength="22.6" lengthAdjust="spacingAndGlyphs">3.5u</text><text x="355" y="295.5" text-anchor="middle">4u</text><text x="387" y="295.5" text-anchor="middle" textLength="22.6" lengthAdjust="spacingAndGlyphs">4.5u</text><text x="419" y="295.5" text-anchor="middle">5u</text><text x="451" y="295.5" text-anchor="middle" textLength="22.6" lengthAdjust="spacingAndGlyphs">5.5u</text><text x="483" y="295.5" text-anchor="middle">6u</text><text x="515" y="295.5" text-anchor="middle" textLength="22.6" lengthAdjust="spacingAndGlyphs">6.5u</text><text x="547" y="295.5" text-anchor="middle">7u</text><text x="579" y="295.5" text-anchor="middle" textLength="22.6" lengthAdjust="spacingAndGlyphs">7.5u</text><text x="611" y="295.5" text-anchor="middle">8u</text><text x="88.5" y="45.5" text-anchor="end" textLength="22.2" lengthAdjust="spacingAndGlyphs">15m</text><text x="88.5" y="79.5" text-anchor="end" textLength="22.2" lengthAdjust="spacingAndGlyphs">10m</text><text x="88.5" y="112.5" text-anchor="end" textLength="15.8" lengthAdjust="spacingAndGlyphs">5m</text><text x="88.5" y="146.5" text-anchor="end" textLength="7" lengthAdjust="spacingAndGlyphs">0</text><text x="88.5" y="179.5" text-anchor="end" textLength="19.7" lengthAdjust="spacingAndGlyphs">-5m</text><text x="88.5" y="213.5" text-anchor="end" textLength="26.2" lengthAdjust="spacingAndGlyphs">-10m</text><text x="88.5" y="246.5" text-anchor="end" textLength="26.2" lengthAdjust="spacingAndGlyphs">-15m</text><text x="88.5" y="280.5" text-anchor="end" textLength="26.2" lengthAdjust="spacingAndGlyphs">-20m</text></g>
</svg>
<div class="legend"></div><div class="lgl"></div><div class="lgr"></div><div class="lgt"></div><div class="lgb"></div>
<div class="t lt" style="left:308px;transform:scaleX(.855)">Gscint_US</div>
<div class="ic" style="left:383px"><svg width="25" height="19" shape-rendering="crispEdges"><path d="M2.5 13.5L12.5 3.5L22.5 13.5" stroke="#ffff00" fill="none"/></svg></div>
<div class="t lt" style="left:414.3px;transform:scaleX(.86)">DS cherenk</div>
<div class="ic" style="left:489px"><svg width="25" height="19" shape-rendering="crispEdges"><path d="M2.5 13.5L10.5 3.5L18.5 13.5L22.5 8.5" stroke="#ff5050" fill="none"/></svg></div>
<div class="t lt" style="left:520px;transform:scaleX(.945)">Drift scint</div>
<div class="ic" style="left:595px"><svg width="25" height="19" shape-rendering="crispEdges"><path d="M2.5 13.5L10.5 3.5L18.5 13.5L22.5 8.5" stroke="#1eff1e" fill="none"/></svg></div>
<div class="t note" style="top:355px;transform:scaleX(.994)">Offset and scale for display only.</div>
<div class="t note" style="top:370px;transform:scaleX(.968)">True voltages saved to .csv</div>
<div class="t lab" style="top:343.5px;transform:scaleX(1)">Offsets</div>
<div class="t lab" style="top:376px;transform:scaleX(.92)">Scale</div>
<svg class="plot" width="643" height="425" viewBox="0 0 643 425"><defs><linearGradient id="ov" x1="0" y1="0" x2="0" y2="1"><stop offset="0" stop-color="#adadad"/><stop offset="1" stop-color="#858585"/></linearGradient><linearGradient id="oh" x1="0" y1="0" x2="1" y2="0"><stop offset="0" stop-color="#adadad"/><stop offset="1" stop-color="#828282"/></linearGradient><linearGradient id="cv" x1="0" y1="0" x2="0" y2="1"><stop offset="0" stop-color="#a6a6a6"/><stop offset="1" stop-color="#747474"/></linearGradient><linearGradient id="ch" x1="0" y1="0" x2="1" y2="0"><stop offset="0" stop-color="#a6a6a6"/><stop offset="1" stop-color="#787878"/></linearGradient><linearGradient id="cr" x1="0" y1="0" x2="1" y2="0"><stop offset="0" stop-color="#a8a8a8"/><stop offset=".45" stop-color="#c0c0c0"/><stop offset="1" stop-color="#bcbcbc"/></linearGradient></defs>
<polygon points="300,342 629.5,342 625,346 304,346" fill="url(#ov)"/>
<polygon points="300,342 304,346 304,397.4 300,401" fill="url(#oh)"/>
<polygon points="629.5,342 629.5,401 625,397.4 625,346" fill="#c2c2c2"/>
<polygon points="300,401 629.5,401 625,397.4 304,397.4" fill="#c3c3c3"/>
<polygon points="304,346 410,346 407.3,350 308,350" fill="url(#cv)"/>
<polygon points="304,346 308,350 308,367 304,370.4" fill="url(#ch)"/>
<polygon points="410,346 410,370.4 407.3,367 407.3,350" fill="url(#cr)"/>
<polygon points="304,370.4 410,370.4 407.3,367 308,367" fill="#b6b6b6"/>
<rect x="308" y="350" width="99.3" height="17" fill="#fafafa"/>
<polygon points="410,346 516.5,346 514,350 414.7,350" fill="url(#cv)"/>
<polygon points="410,346 414.7,350 414.7,367 410,370.4" fill="url(#ch)"/>
<polygon points="516.5,346 516.5,370.4 514,367 514,350" fill="url(#cr)"/>
<polygon points="410,370.4 516.5,370.4 514,367 414.7,367" fill="#b6b6b6"/>
<rect x="414.7" y="350" width="99.3" height="17" fill="#fafafa"/>
<polygon points="516.5,346 625,346 622,350 521,350" fill="url(#cv)"/>
<polygon points="516.5,346 521,350 521,367 516.5,370.4" fill="url(#ch)"/>
<polygon points="625,346 625,370.4 622,367 622,350" fill="url(#cr)"/>
<polygon points="516.5,370.4 625,370.4 622,367 521,367" fill="#b6b6b6"/>
<rect x="521" y="350" width="101.0" height="17" fill="#fafafa"/>
<polygon points="304,370.4 410,370.4 407.3,377 308,377" fill="url(#cv)"/>
<polygon points="304,370.4 308,377 308,394 304,397.4" fill="url(#ch)"/>
<polygon points="410,370.4 410,397.4 407.3,394 407.3,377" fill="url(#cr)"/>
<polygon points="304,397.4 410,397.4 407.3,394 308,394" fill="#b6b6b6"/>
<rect x="308" y="377" width="99.3" height="17" fill="#fafafa"/>
<polygon points="410,370.4 516.5,370.4 514,377 414.7,377" fill="url(#cv)"/>
<polygon points="410,370.4 414.7,377 414.7,394 410,397.4" fill="url(#ch)"/>
<polygon points="516.5,370.4 516.5,397.4 514,394 514,377" fill="url(#cr)"/>
<polygon points="410,397.4 516.5,397.4 514,394 414.7,394" fill="#b6b6b6"/>
<rect x="414.7" y="377" width="99.3" height="17" fill="#fafafa"/>
<polygon points="516.5,370.4 625,370.4 622,377 521,377" fill="url(#cv)"/>
<polygon points="516.5,370.4 521,377 521,394 516.5,397.4" fill="url(#ch)"/>
<polygon points="625,370.4 625,397.4 622,394 622,377" fill="url(#cr)"/>
<polygon points="516.5,397.4 625,397.4 622,394 521,394" fill="#b6b6b6"/>
<rect x="521" y="377" width="101.0" height="17" fill="#fafafa"/>
</svg>
<div class="t cv" style="left:310.3px;top:351.5px">0.01</div>
<div class="t cv" style="left:417.2px;top:351.5px">0.001</div>
<div class="t cv" style="left:523.6px;top:351.5px">-0.001</div>
<div class="t cv" style="left:310.3px;top:378.5px">0.1</div>
<div class="t cv" style="left:417.2px;top:378.5px">1</div>
<div class="t cv" style="left:523.6px;top:378.5px">0.1</div>
</body></html>
